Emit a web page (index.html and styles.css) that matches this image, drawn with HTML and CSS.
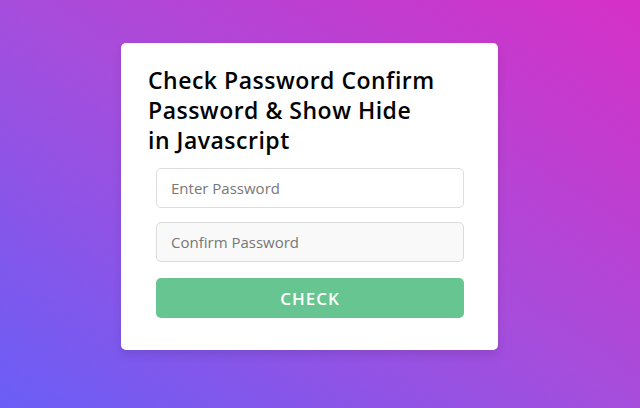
FILE: index.html
```
<!DOCTYPE html>
<html lang="en">
<head>
<meta charset="utf-8">
<title>Check Password Confirm Password</title>
<link rel="stylesheet" href="styles.css">
</head>
<body>
<main class="page">
  <section class="card">
    <h1 class="title">Check Password Confirm<br>Password &amp; Show Hide<br>in Javascript</h1>
    <form class="form">
      <input class="field" type="password" placeholder="Enter Password">
      <input class="field field-muted" type="password" placeholder="Confirm Password">
      <button class="btn" type="button">CHECK</button>
    </form>
  </section>
</main>
</body>
</html>
```
FILE: styles.css
```
* { box-sizing: border-box; }
html, body { margin: 0; height: 100%; }
body {
  font-family: "Open Sans", "DejaVu Sans", sans-serif;
  background: linear-gradient(to top right, #6a5ef6 0%, #a64ddc 50%, #d630c6 100%);
}
.page {
  height: 408px;
  display: flex;
  justify-content: flex-start;
  align-items: flex-start;
  padding: 43px 0 0 121px;
}
.card {
  width: 377px;
  height: 307px;
  background: #fff;
  border-radius: 5px;
  box-shadow: 0 5px 10px rgba(0,0,0,0.1);
  padding: 22px 34px 0 35px;
}
.title {
  margin: 0 0 0 -8px;
  font-size: 23px;
  line-height: 30px;
  font-weight: 600;
  letter-spacing: 0.5px;
  color: #000;
}
.form {
  margin-top: 13px;
  display: flex;
  flex-direction: column;
}
.field {
  height: 40px;
  width: 100%;
  border: 1px solid #dcdcdc;
  border-radius: 5px;
  padding: 0 14px;
  font-family: inherit;
  font-size: 15px;
  color: #333;
  background: #fff;
  margin-bottom: 14px;
}
.field::placeholder { color: #777; }
.field-muted { background: #f9f9f9; }
.btn {
  margin-top: 2px;
  height: 40px;
  width: 100%;
  border: none;
  border-radius: 5px;
  background: #67c591;
  color: #fff;
  font-family: inherit;
  font-size: 17px;
  font-weight: 600;
  letter-spacing: 1px;
}
```
